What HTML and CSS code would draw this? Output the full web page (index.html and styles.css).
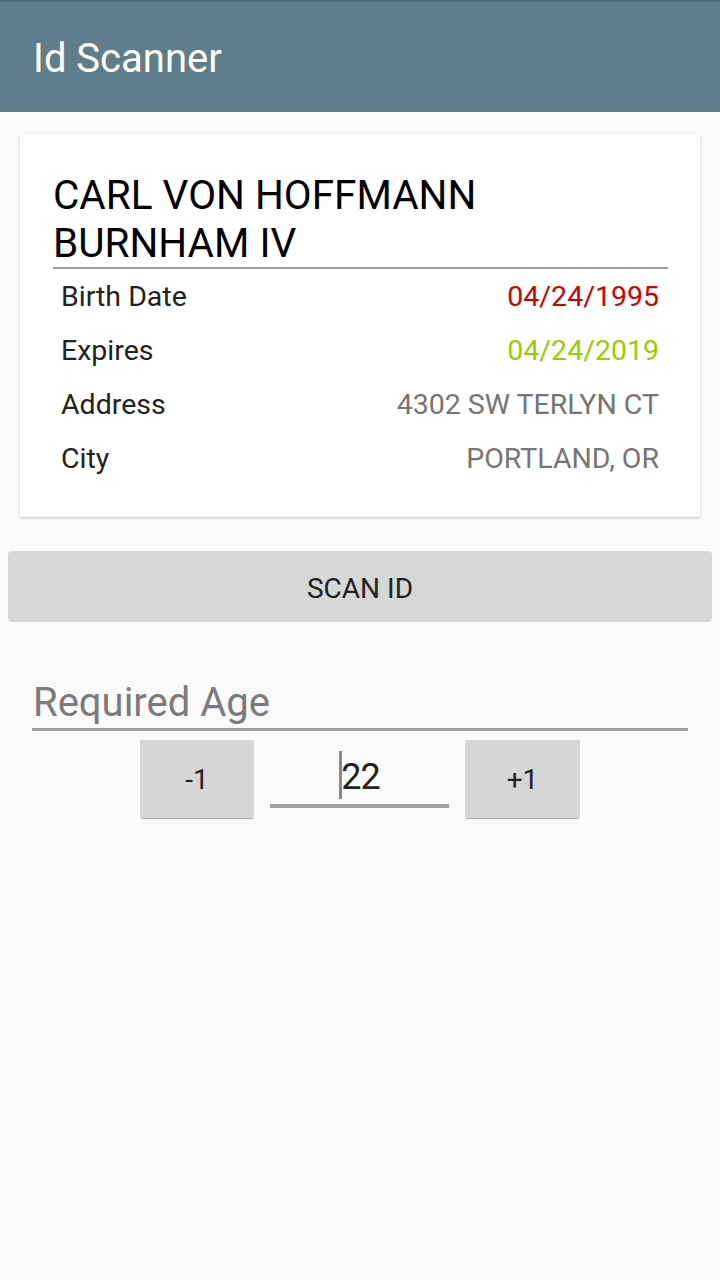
FILE: index.html
```html
<!DOCTYPE html>
<html>
<head>
<meta charset="utf-8">
<link rel="stylesheet" href="styles.css">
</head>
<body>
<header class="appbar"><h1 class="title">Id Scanner</h1></header>
<main class="content">
  <section class="card">
    <div class="name">CARL VON HOFFMANN<br>BURNHAM IV</div>
    <div class="rows">
      <div class="row"><span class="label">Birth Date</span><span class="value red">04/24/1995</span></div>
      <div class="row"><span class="label">Expires</span><span class="value green">04/24/2019</span></div>
      <div class="row"><span class="label">Address</span><span class="value gray">4302 SW TERLYN CT</span></div>
      <div class="row"><span class="label">City</span><span class="value gray">PORTLAND, OR</span></div>
    </div>
  </section>
  <button class="scan">SCAN ID</button>
  <div class="age-field">Required Age</div>
  <div class="stepper">
    <button class="step">-1</button>
    <div class="age-input"><span class="caret"></span><span class="age-value">22</span></div>
    <button class="step step-wide">+1</button>
  </div>
</main>
</body>
</html>
```
FILE: styles.css
```css
html, body {
  margin: 0;
  padding: 0;
  background: #fafafa;
  font-family: Roboto, "Noto Sans", sans-serif;
  width: 720px;
  height: 1280px;
  overflow: hidden;
}
.appbar {
  height: 110px;
  background: #607d8b;
  border-top: 2px solid #4f6874;
  display: flex;
  align-items: center;
  padding-left: 33px;
}
.title {
  margin: 0;
  color: #ffffff;
  font-weight: 400;
  font-size: 40px;
  line-height: 48px;
  padding-top: 3px;
}
.content {
  display: flex;
  flex-direction: column;
}
.card {
  margin: 22px 20px 0;
  background: #ffffff;
  box-shadow: 0 1px 3px rgba(0,0,0,0.22);
  border-radius: 2px;
  padding: 37px 32px 32px 33px;
}
.name {
  font-size: 40.5px;
  line-height: 48px;
  color: #000000;
  border-bottom: 2px solid #9e9e9e;
  padding-bottom: 0;
}
.rows {
  padding: 0 9px 0 8px;
}
.row {
  height: 54px;
  display: flex;
  align-items: center;
  justify-content: space-between;
  font-size: 28.5px;
  padding-top: 1px;
  box-sizing: border-box;
}
.label { color: #222222; }
.red { color: #d00000; }
.green { color: #99cc00; }
.gray { color: #757575; }
.scan {
  margin: 34px 8px 0;
  height: 71px;
  border: none;
  border-radius: 4px;
  background: #d6d7d7;
  color: #222222;
  font-family: Roboto, sans-serif;
  font-size: 28px;
  padding: 3px 0 0;
}
.age-field {
  margin: 57px 32px 0;
  font-size: 40px;
  line-height: 47px;
  color: #7b7b7b;
  padding-left: 1px;
  padding-bottom: 2px;
  border-bottom: 3px solid #a0a0a0;
}
.stepper {
  margin-top: 9px;
  display: flex;
  justify-content: center;
  gap: 16px;
}
.step {
  width: 114px;
  height: 78px;
  border: none;
  border-radius: 2px;
  background: #d6d6d6;
  box-shadow: 0 2px 1px -1px rgba(0,0,0,0.35);
  color: #222222;
  font-family: Roboto, sans-serif;
  font-size: 28px;
  padding: 0;
}
.step-wide {
  width: 115px;
}
.age-input {
  width: 179px;
  height: 54px;
  padding-top: 10px;
  border-bottom: 4px solid #a0a0a0;
  display: flex;
  align-items: center;
  justify-content: center;
  box-sizing: content-box;
}
.caret {
  display: inline-block;
  width: 3px;
  height: 48px;
  background: #8a8a8a;
  margin-top: -4px;
}
.age-value {
  font-size: 36px;
  color: #222222;
  margin-left: -1px;
  letter-spacing: -1px;
}
```
